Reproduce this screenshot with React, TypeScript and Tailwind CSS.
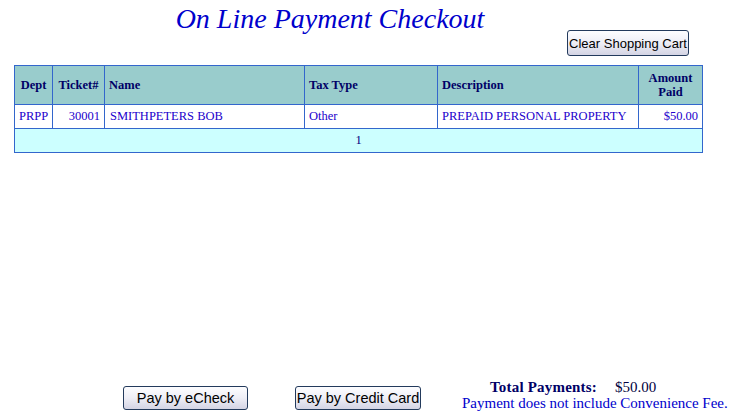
import React from 'react';

const rows = [
  { dept: 'PRPP', ticket: '30001', name: 'SMITHPETERS BOB', taxType: 'Other', description: 'PREPAID PERSONAL PROPERTY', amount: '$50.00' },
];

const btn =
  "h-[24px] rounded-[3px] border border-[#233a5c] bg-gradient-to-b from-[#fdfdff] via-[#eeeef6] to-[#d4d4e4] text-black leading-none font-['Liberation_Sans',Arial,sans-serif]";

export default function App() {
  return (
    <div className="flex h-[419px] w-[732px] flex-col bg-white font-['Liberation_Serif','Times_New_Roman',serif]">
      {/* Title */}
      <div className="h-[30px] w-[660px] text-center text-[28px] italic leading-[38px] text-[#0000cc]">
        On Line Payment Checkout
      </div>

      {/* Clear cart */}
      <div className="flex justify-end pr-[43px]">
        <button className={btn + ' h-[26px] w-[122px] text-[13px]'}>Clear Shopping Cart</button>
      </div>

      {/* Cart grid */}
      <table className="ml-[14px] mt-[9px] w-[688px] table-fixed border-collapse border border-[#3366cc] text-[12.5px]">
        <colgroup>
          <col className="w-[38px]" />
          <col className="w-[52px]" />
          <col className="w-[200px]" />
          <col className="w-[133px]" />
          <col className="w-[201px]" />
          <col className="w-[64px]" />
        </colgroup>
        <thead>
          <tr className="h-[39px] bg-[#99cccc] font-bold leading-[14px] text-[#000066]">
            <th className="border border-[#3366cc] px-[2px] text-center">Dept</th>
            <th className="border border-[#3366cc] px-[2px] text-center">Ticket#</th>
            <th className="border border-[#3366cc] px-[4px] text-left">Name</th>
            <th className="border border-[#3366cc] px-[4px] text-left">Tax Type</th>
            <th className="border border-[#3366cc] px-[4px] text-left">Description</th>
            <th className="border border-[#3366cc] px-[2px] text-center">
              Amount
              <br />
              Paid
            </th>
          </tr>
        </thead>
        <tbody>
          {rows.map((r) => (
            <tr key={r.ticket} className="h-[24px] bg-white text-[#2200cc]">
              <td className="border border-[#3366cc] px-[4px]">{r.dept}</td>
              <td className="border border-[#3366cc] px-[4px] text-right">{r.ticket}</td>
              <td className="border border-[#3366cc] px-[5px]">{r.name}</td>
              <td className="border border-[#3366cc] px-[4px]">{r.taxType}</td>
              <td className="border border-[#3366cc] px-[4px]">{r.description}</td>
              <td className="border border-[#3366cc] px-[4px] text-right">{r.amount}</td>
            </tr>
          ))}
          <tr className="h-[24px] bg-[#ccffff] text-[#000080]">
            <td colSpan={6} className="border border-[#3366cc] text-center">
              1
            </td>
          </tr>
        </tbody>
      </table>

      <div className="flex-1" />

      {/* Payment options */}
      <div className="flex h-[40px] items-start pl-[123px]">
        <button className={btn + ' mt-[7px] w-[125px] text-[14.5px]'}>Pay by eCheck</button>
        <button className={btn + ' ml-[47px] mt-[7px] w-[126px] text-[14.5px]'}>Pay by Credit Card</button>
        <div className="ml-[41px] flex flex-col text-[15px] leading-[16px]">
          <div className="flex pl-[28px]">
            <span className="font-bold tracking-[0.2px] text-[#000066]">Total Payments:</span>
            <span className="ml-[18px] text-[#000040]">$50.00</span>
          </div>
          <div className="whitespace-nowrap text-[#0000cc]">Payment does not include Convenience Fee.</div>
        </div>
      </div>
    </div>
  );
}
